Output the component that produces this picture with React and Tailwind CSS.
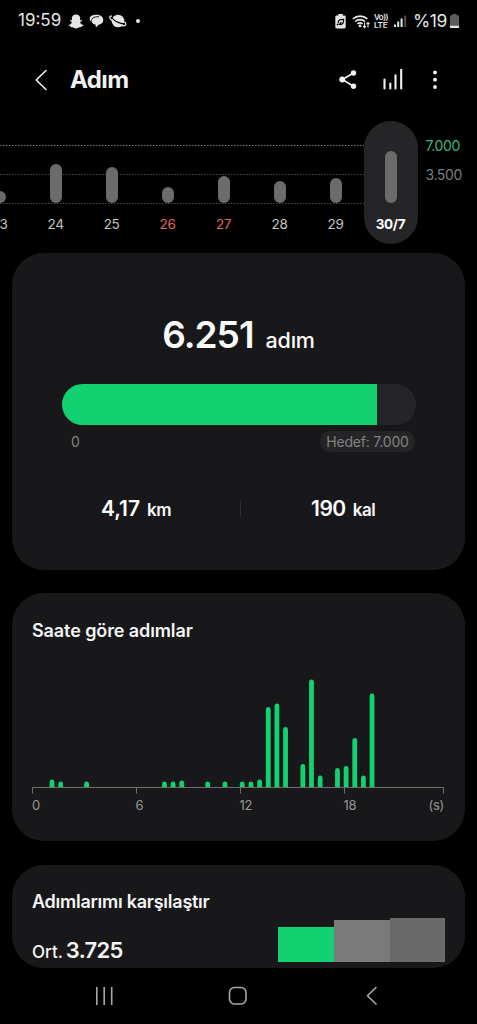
import { FaSnapchatGhost } from "react-icons/fa";

const days = [
  { label: "23", height: 12 },
  { label: "24", height: 39 },
  { label: "25", height: 36 },
  { label: "26", height: 16, weekend: true },
  { label: "27", height: 27, weekend: true },
  { label: "28", height: 22 },
  { label: "29", height: 25 },
];

// [half-hour slot, bar height]
const hourly = [
  [2, 8], [3, 6], [6, 6], [15, 6], [16, 6], [17, 7], [20, 6], [22, 6],
  [24, 6], [25, 6], [26, 8], [27, 80.5], [28, 84], [29, 60.5], [31, 23.5],
  [32, 108], [33, 12], [35, 19.5], [36, 21.5], [37, 49.5], [38, 12], [39, 94],
];

function StatusBar() {
  return (
    <div className="flex h-[42px] items-center justify-between pl-[18px] pr-[17px] text-[#e6e6e6]">
      <div className="flex items-center">
        <span className="w-[50px] text-[17px]">19:59</span>
        <FaSnapchatGhost className="h-[15px] w-4" />
        <svg className="ml-[5px] h-[14px] w-[15px]" viewBox="0 0 15 14">
          <path d="M7.500.8C11.600.8 14.300 3 14.300 6.100S12 10.400 9.600 10.700L7 13.600 6.400 10.600C4.600 10.300 3.400 9.300 2.900 8 1.500 7.400.7 6.300.7 4.800.7 2.200 3.500.8 7.500.8Z" fill="currentColor" />
          <path d="M2.300 7.800C1.900 4.400 4.800 2.500 10 2.700" fill="none" stroke="#000" strokeWidth=".9" />
        </svg>
        <svg className="ml-[5px] h-[14px] w-[18px]" viewBox="0 0 18 14">
          <circle cx="9" cy="7" r="6.300" fill="currentColor" />
          <path d="M3 2.200C.2 1.800.2 3.600 2 5.600 5 9 12 12.400 15.500 11.600c2-.5 1.400-2.500 0-3.900" fill="none" stroke="currentColor" strokeWidth="1.300" />
          <path d="M3 4C5.500 7.200 11 9.900 15.300 9.900" fill="none" stroke="#000" strokeWidth="1.200" />
        </svg>
        <span className="ml-[9px] size-1 rounded-full bg-[#e6e6e6]" />
      </div>
      <div className="flex items-center">
        <svg className="h-[15px] w-[11px]" viewBox="0 0 11 15">
          <path d="M3.300 0h4.400v1.500h1.600a1.400 1.400 0 0 1 1.400 1.400v10.200a1.400 1.400 0 0 1-1.400 1.400H1.700A1.400 1.400 0 0 1 .3 13.100V2.900a1.400 1.400 0 0 1 1.400-1.400h1.600Z" fill="currentColor" />
          <path d="M2 11.200 3.400 9.600M3.300 8.900C2.900 6 5 5.200 8.600 5.400 8.800 8.800 7.400 10.900 4.700 10.400L6.300 8" fill="none" stroke="#000" strokeWidth="1.300" />
        </svg>
        <svg className="ml-[6px] h-[15px] w-[18px]" viewBox="0 0 18 15" fill="none" stroke="currentColor" strokeWidth="1.600">
          <path d="M.8 4.900a11 11 0 0 1 14.600 0M3.100 7.500a7.500 7.500 0 0 1 10 0M5.300 9.900a4.200 4.200 0 0 1 5.300 0" />
          <circle cx="8" cy="11.900" r="1.400" fill="currentColor" stroke="none" />
          <path d="M12.500 8.500v5M11 12l1.500 1.600L14 12M16 13.600v-5M14.500 10.200 16 8.600l1.500 1.600" strokeWidth="1.100" />
        </svg>
        <div className="ml-[4px] w-[15px] text-[8px] font-semibold leading-[8px] tracking-[-0.5px]">
          <div>Vo))</div>
          <div className="tracking-[-0.2px]">LTE</div>
        </div>
        <svg className="ml-[5px] h-[14px] w-[13px]" viewBox="0 0 13 14" fill="currentColor">
          <rect x="0" y="10.500" width="2" height="2.500" />
          <rect x="3.200" y="7.500" width="2" height="5.500" />
          <rect x="6.600" y="4.500" width="2" height="8.500" />
          <rect x="10.200" y="1.500" width="2" height="11.500" opacity=".35" />
        </svg>
        <span className="ml-[6px] w-[36px] text-[17.500px] tracking-[-0.4px]">%19</span>
        <svg className="h-[14px] w-[11px]" viewBox="0 0 11 14">
          <path d="M3.500 0h4v1.300h1.300a1.300 1.300 0 0 1 1.300 1.300V14H.9V2.600a1.300 1.300 0 0 1 1.300-1.300h1.300Z" fill="#5c5c5c" />
          <path d="M.9 11.800h9.200v1a1.200 1.200 0 0 1-1.200 1.200H2.100a1.200 1.200 0 0 1-1.200-1.200Z" fill="#e6e6e6" />
        </svg>
      </div>
    </div>
  );
}

function Header() {
  return (
    <header className="flex h-[76px] items-center pl-[34px] pr-[39px] text-[#f2f2f2]">
      <svg className="h-[22px] w-[14px]" viewBox="0 0 14 22" fill="none" stroke="currentColor" strokeWidth="1.600" strokeLinecap="round" strokeLinejoin="round">
        <path d="M12 1.500 2.200 11 12 20.500" />
      </svg>
      <h1 className="ml-[22px] flex-1 text-[24px] font-bold tracking-[-0.6px]">Adım</h1>
      <svg className="h-[20px] w-[18px]" viewBox="0 0 18 20" fill="currentColor">
        <path d="M14.500 3 3.500 9.500l11 6.700" fill="none" stroke="currentColor" strokeWidth="1.700" />
        <circle cx="14.500" cy="3" r="2.700" />
        <circle cx="3.200" cy="9.500" r="2.900" />
        <circle cx="14.500" cy="16.200" r="2.700" />
      </svg>
      <svg className="ml-[25px] h-[22px] w-[22px]" viewBox="0 0 22 22" stroke="currentColor" strokeWidth="2.100" strokeLinecap="round">
        <path d="M2.500 10.500v9M8.300 14.500v5M13.500 6.200v13.300M19.200.9v18.600" />
      </svg>
      <svg className="ml-[28px] h-[20px] w-[6px]" viewBox="0 0 6 20" fill="currentColor">
        <circle cx="3" cy="2.500" r="1.900" />
        <circle cx="3" cy="9.700" r="1.900" />
        <circle cx="3" cy="17" r="1.900" />
      </svg>
    </header>
  );
}

function WeekChart() {
  return (
    <section className="relative flex h-[135px]">
      <svg className="absolute left-0 top-0 h-[90px] w-[364px]" viewBox="0 0 364 90" strokeDasharray="1.500 1.500">
        <path d="M0 27.500h364" stroke="#777" />
        <path d="M0 56.500h364M0 85.500h364" stroke="#4a4a4a" />
      </svg>
      <div className="relative -ml-[28.500px] flex">
        {days.map((day) => (
          <div key={day.label} className="flex w-[56px] flex-col items-center">
            <div className="flex h-[85px] items-end">
              <div className="w-3 rounded-full bg-[#6b6b6b]" style={{ height: day.height }} />
            </div>
            <span className={`mt-[10.500px] text-[13.500px] leading-5 tracking-[-0.4px] ${day.weekend ? "text-[#e26660]" : "text-[#c4c4c4]"}`}>
              {day.label}
            </span>
          </div>
        ))}
        <div className="mt-[3px] flex h-[122.500px] w-[54px] flex-col items-center rounded-full bg-[#252527]">
          <div className="flex h-[82px] items-end">
            <div className="h-[52px] w-3 rounded-full bg-[#6b6b6b]" />
          </div>
          <span className="mt-[10.500px] text-[13.500px] font-bold leading-5 tracking-[-0.3px] text-white">30/7</span>
        </div>
      </div>
      <div className="ml-[8px] mt-[18px] text-[14px] leading-[20px] tracking-[-0.4px]">
        <div className="text-[#3cb57c]">7.000</div>
        <div className="mt-[9px] text-[#7d7d7d]">3.500</div>
      </div>
    </section>
  );
}

function SummaryCard() {
  return (
    <section className="mx-3 h-[317px] rounded-[32px] bg-[#18181a] pt-[58px] text-[#fafafa]">
      <div className="flex h-12 items-baseline justify-center leading-[48px]">
        <span className="text-[37px] font-semibold tracking-[-1px]">6.251</span>
        <span className="ml-[12px] text-[21.500px] font-medium tracking-[-0.2px]">adım</span>
      </div>
      <div className="ml-[50px] mt-[25px] h-[41px] w-[354px] overflow-hidden rounded-full bg-[#252527]">
        <div className="h-full w-[315px] bg-[#12d170]" />
      </div>
      <div className="ml-[50px] mt-[6px] flex w-[353px] items-center justify-between text-[14px] tracking-[-0.2px] text-[#828282]">
        <span className="ml-[9px]">0</span>
        <span className="flex h-[21px] w-[95px] items-center justify-center rounded-full bg-[#252527]">Hedef: 7.000</span>
      </div>
      <div className="mt-[43px] flex h-7 items-center font-semibold">
        <div className="flex w-[228px] items-baseline pl-[89px]">
          <span className="text-[21px]">4,17</span>
          <span className="ml-[7px] text-[17px] tracking-[-0.4px]">km</span>
        </div>
        <div className="h-4 w-px bg-[#303032]" />
        <div className="flex items-baseline pl-[70px]">
          <span className="text-[21px] tracking-[-0.500px]">190</span>
          <span className="ml-[7px] text-[17px] tracking-[-0.4px]">kal</span>
        </div>
      </div>
    </section>
  );
}

function HourlyCard() {
  return (
    <section className="mx-3 mt-[23px] h-[248px] rounded-[32px] bg-[#18181a] px-[20px] pt-[26px]">
      <h2 className="text-[18px] font-semibold leading-6 tracking-[-0.1px] text-[#f5f5f5]">Saate göre adımlar</h2>
      <svg className="mt-[30px] h-[122px] w-[412px]" viewBox="0 0 412 122">
        {hourly.map(([slot, height]) => (
          <path
            key={slot}
            d={`M${slot * 8.65 + 0.3} 115v${-height + 2}a2.400 2.400 0 0 1 4.800 0v${height - 2}z`}
            fill="#12d170"
          />
        ))}
        <path d="M.5 120.500v-6h411v6M104.500 114.500v6M208.500 114.500v6M312.500 114.500v6" fill="none" stroke="#6e6e6e" />
      </svg>
      <div className="-mt-[0.500px] flex w-[412px] text-[13px] leading-5 tracking-[-0.3px] text-[#969696]">
        <span className="w-[103.500px]">0</span>
        <span className="w-[104px]">6</span>
        <span className="w-[104px]">12</span>
        <span className="flex-1">18</span>
        <span>(s)</span>
      </div>
    </section>
  );
}

function CompareCard() {
  return (
    <section className="mx-3 mt-6 h-[103px] rounded-[32px] bg-[#18181a] px-5 pt-[25px] text-[#f5f5f5]">
      <h2 className="text-[18px] font-semibold leading-6 tracking-[-0.25px]">Adımlarımı karşılaştır</h2>
      <div className="-mt-[9px] flex items-end justify-between">
        <p className="mb-[-2px] flex items-baseline leading-6">
          <span className="text-[17px] font-medium">Ort.</span>
          <span className="ml-[3px] text-[22px] font-semibold tracking-[-0.7px]">3.725</span>
        </p>
        <div className="flex h-[57px] items-end">
          <div className="h-[35px] w-[56px] bg-[#12d170]" />
          <div className="h-[42.500px] w-[56px] bg-[#7a7a7b]" />
          <div className="h-[44px] w-[55px] bg-[#6a6a6b]" />
        </div>
      </div>
    </section>
  );
}

function NavBar() {
  return (
    <nav className="flex h-[56px] items-center pl-[95px] text-[#a8a8a8]">
      <svg className="h-[18px] w-[18px]" viewBox="0 0 18 18" stroke="currentColor" strokeWidth="1.600">
        <path d="M1.800 0v18M9.200 0v18M16.700 0v18" />
      </svg>
      <svg className="ml-[115px] h-[20px] w-[20px]" viewBox="0 0 20 20" fill="none" stroke="currentColor" strokeWidth="1.600">
        <rect x="1.500" y="1.500" width="16.500" height="16.500" rx="5" />
      </svg>
      <svg className="ml-[118px] h-[19px] w-[12px]" viewBox="0 0 12 19" fill="none" stroke="currentColor" strokeWidth="1.600">
        <path d="M10.500 0 1.500 8.800l9 8.700" />
      </svg>
    </nav>
  );
}

export default function App() {
  return (
    <div className="h-[1024px] w-[477px] overflow-hidden bg-black font-[Inter,Roboto,sans-serif]">
      <StatusBar />
      <Header />
      <WeekChart />
      <SummaryCard />
      <HourlyCard />
      <CompareCard />
      <NavBar />
    </div>
  );
}
